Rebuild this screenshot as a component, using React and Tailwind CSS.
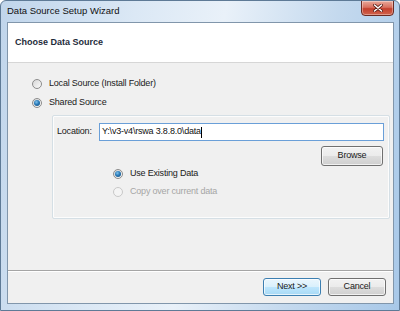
const Radio = ({ checked = false, disabled = false }) => (
  <span
    className={`relative flex items-center justify-center w-[10px] h-[10px] rounded-full border shrink-0 ${
      disabled
        ? "border-[#c8c8c8] bg-[#f4f4f4]"
        : "border-[#8c8c8c] bg-[linear-gradient(135deg,#d6d6d6,#fbfbfb)]"
    }`}
  >
    {checked && (
      <span className="w-[6px] h-[6px] rounded-full bg-[radial-gradient(circle_at_40%_35%,#7ec2ec_0%,#2a7ab8_45%,#134a78_100%)]" />
    )}
  </span>
);

const RadioRow = ({ label, checked, disabled }) => (
  <div className="flex items-center h-[16px] gap-[7px]">
    <Radio checked={checked} disabled={disabled} />
    <span className={disabled ? "text-[#a6a6a6]" : "text-[#1a1a1a]"}>{label}</span>
  </div>
);

const btn =
  "flex items-center justify-center rounded-[3px] border text-[#1a1a1a] shadow-[inset_0_0_0_1px_rgba(255,255,255,0.7)]";
const btnGray =
  "border-[#707070] bg-[linear-gradient(to_bottom,#f2f2f2_0%,#ebebeb_50%,#dddddd_50%,#cfcfcf_100%)]";
const btnBlue =
  "border-[#3c7fb1] bg-[linear-gradient(to_bottom,#eaf6fd_0%,#d9f0fc_50%,#bee6fd_50%,#a7d9f5_100%)]";

export default function App() {
  return (
    <div className="w-[400px] h-[311px] flex flex-col border border-[#5e7a96] rounded-t-[6px] bg-[linear-gradient(100deg,#c0d5eb_0%,#dbe8f5_30%,#e9f1f9_50%,#c4d9ee_75%,#a8c8e8_100%)] font-['Liberation_Sans',Arial,sans-serif] overflow-hidden">
      {/* Title bar */}
      <div className="h-[21px] flex items-start justify-between pl-[6px] pr-[5px]">
        <div className="h-[21px] flex items-center text-[9.5px] text-[#111]">Data Source Setup Wizard</div>
        <button className="-mt-px w-[33px] h-[16px] flex items-center justify-center rounded-b-[4px] border border-[#6b2a22] bg-[linear-gradient(to_bottom,#e9a99b_0%,#d8705f_45%,#c4402d_55%,#d0634d_100%)] shadow-[inset_0_0_0_1px_rgba(255,255,255,0.35)]">
          <svg width="10" height="8" viewBox="0 0 10 8">
            <path d="M1.5 1 L8.5 7 M8.5 1 L1.5 7" stroke="#5a1a12" strokeWidth="3" strokeLinecap="round" />
            <path d="M1.5 1 L8.5 7 M8.5 1 L1.5 7" stroke="#ffffff" strokeWidth="1.6" strokeLinecap="round" />
          </svg>
        </button>
      </div>

      {/* Client area */}
      <div className="flex-1 ml-[6px] mr-[5px] mb-[6px] flex flex-col border border-[#8196ab] bg-[#f0f0f0] text-[9px] tracking-[-0.2px]">
        <div className="h-[40px] shrink-0 bg-white border-b border-[#d6d6d6] flex items-center pl-[7px]">
          <span className="font-bold text-[9px] tracking-normal text-[#1e2b3a]">Choose Data Source</span>
        </div>

        <div className="flex-1 pt-[13px] pl-[24px]">
          <div className="flex flex-col gap-[3px]">
            <RadioRow label="Local Source (Install Folder)" />
            <RadioRow label="Shared Source" checked />
          </div>

          <div className="mt-[4px] ml-[20px] w-[338px] border border-[#d5dfe5] rounded-[2px] shadow-[inset_0_0_0_1px_rgba(255,255,255,0.8)] pt-[7px] pb-[18px] pl-[4px] pr-[5px]">
            <div className="flex items-center">
              <span className="w-[42px] text-[#1a1a1a]">Location:</span>
              <div className="flex-1 h-[18px] flex items-center border border-[#6a9fd8] bg-white pl-[2px] text-[#111]">
                Y:\v3-v4\rswa 3.8.8.0\data
                <span className="w-px h-[11px] bg-black" />
              </div>
            </div>
            <div className="flex justify-end mt-[5px] mr-[1px]">
              <button className={`${btn} ${btnGray} w-[62px] h-[20px]`}>Browse</button>
            </div>
            <div className="flex flex-col gap-[2px] pl-[56px]">
              <RadioRow label="Use Existing Data" checked />
              <RadioRow label="Copy over current data" disabled />
            </div>
          </div>
        </div>

        <div className="h-[33px] shrink-0 border-t border-[#a5a5a5] shadow-[inset_0_1px_0_#ffffff] flex justify-end items-start gap-[7px] pt-[7px] pr-[7px]">
          <button className={`${btn} ${btnBlue} w-[58px] h-[18px]`}>Next &gt;&gt;</button>
          <button className={`${btn} ${btnGray} w-[58px] h-[18px]`}>Cancel</button>
        </div>
      </div>
    </div>
  );
}
